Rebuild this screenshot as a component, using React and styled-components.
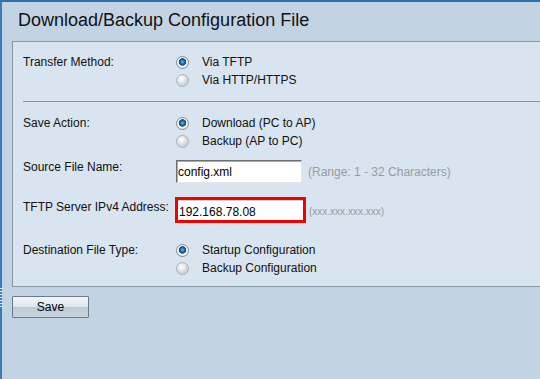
import React from "react";
import styled, { createGlobalStyle } from "styled-components";

const GlobalStyle = createGlobalStyle`
  html, body {
    margin: 0;
    padding: 0;
    background: #c2d4e4;
    overflow: hidden;
  }
  body {
    font-family: "Liberation Sans", Arial, sans-serif;
    font-size: 12px;
    color: #111;
  }
`;

const Page = styled.div`
  display: flex;
  height: 379px;
  box-sizing: border-box;
  border-top: 2px solid #2f6fab;
`;

const Strip = styled.div`
  flex: none;
  width: 2px;
  background: #3a7cbf;
  display: flex;
  flex-direction: column;
`;

const Grip = styled.div`
  margin-top: 286px;
  height: 20px;
  background: repeating-linear-gradient(
    to bottom,
    #e6eef7 0 1px,
    transparent 1px 3px
  );
`;

const Main = styled.div`
  flex: 1;
  min-width: 0;
  padding-left: 10px;
`;

const Title = styled.h1`
  margin: 0;
  padding: 8px 0 0 6px;
  font-size: 18px;
  font-weight: normal;
  line-height: 21px;
  color: #111;
`;

const Panel = styled.div`
  margin-top: 10px;
  background: #d8e4ef;
  border: 1px solid #8697a6;
  border-right: none;
  padding: 11px 0 9px 10px;
`;

const Row = styled.div`
  display: flex;
  align-items: flex-start;
  margin-top: ${(p) => p.$mt || 0}px;
`;

const Label = styled.div`
  flex: none;
  width: 152px;
  line-height: 18px;
  margin-top: ${(p) => p.$mt || 0}px;
`;

const Options = styled.div`
  display: flex;
  flex-direction: column;
`;

const Option = styled.div`
  display: flex;
  align-items: center;
  height: 18px;
`;

const RadioMark = styled.span`
  flex: none;
  width: 13px;
  height: 13px;
  box-sizing: border-box;
  margin: 0 13px 0 1px;
  border-radius: 50%;
  border: 1px solid ${(p) => (p.$checked ? "#7f8e9a" : "#a9b2ba")};
  background: ${(p) =>
    p.$checked
      ? "radial-gradient(circle at 50% 45%, #7cc0ee 0, #1f74b5 1.8px, #0b4a82 3.4px, #ffffff 4.1px, #e6ecf1 5.5px)"
      : "radial-gradient(circle at 40% 35%, #ffffff 0, #ececec 3px, #cdd2d6 6px)"};
`;

const Divider = styled.div`
  margin: 12px 0 12px;
  height: 1px;
  background: #8697a6;
`;

const Field = styled.div`
  display: flex;
  align-items: center;
`;

const TextInput = styled.input`
  box-sizing: border-box;
  width: 126px;
  height: 23px;
  margin: 2px 0 0 1px;
  padding: 0 2px 0 1px;
  border: 1px solid;
  border-color: #6f6f6f #e4e4e4 #e4e4e4 #6f6f6f;
  box-shadow: inset 1px 1px 0 #a9a9a9;
  background: #fff;
  font: 12px "Liberation Sans", Arial, sans-serif;
  color: #000;
  outline: none;
`;

const Highlight = styled.div`
  box-sizing: border-box;
  width: 131px;
  height: 26px;
  border: 3px solid #f20000;
  background: #fff;
  display: flex;
`;

const PlainInput = styled.input`
  box-sizing: border-box;
  width: 100%;
  height: 100%;
  margin: 0;
  padding: 2px 2px 0 1px;
  border: none;
  border-top: 1px solid #cfcfcf;
  background: #fff;
  font: 12px "Liberation Sans", Arial, sans-serif;
  color: #000;
  outline: none;
`;

const Hint = styled.span`
  margin-left: ${(p) => p.$ml}px;
  margin-top: ${(p) => p.$mt || 0}px;
  color: #969ca2;
  font-size: ${(p) => p.$size || 12}px;
`;

const SaveButton = styled.button`
  display: block;
  margin-top: 9px;
  width: 77px;
  height: 22px;
  padding: 0;
  border: 1px solid #6a7a86;
  border-radius: 1px;
  background: linear-gradient(
    to bottom,
    #f2f6f8 0%,
    #dfe7ed 48%,
    #bccbd6 52%,
    #c8d5de 100%
  );
  font: 12px "Liberation Sans", Arial, sans-serif;
  color: #000;
`;

const RadioGroup = ({ options, checked }) => (
  <Options>
    {options.map((o, i) => (
      <Option key={o}>
        <RadioMark $checked={i === checked} />
        {o}
      </Option>
    ))}
  </Options>
);

export default function App() {
  return (
    <>
      <GlobalStyle />
      <Page>
        <Strip>
          <Grip />
        </Strip>
        <Main>
          <Title>Download/Backup Configuration File</Title>
          <Panel>
            <Row>
              <Label>Transfer Method:</Label>
              <RadioGroup options={["Via TFTP", "Via HTTP/HTTPS"]} checked={0} />
            </Row>
            <Divider />
            <Row>
              <Label>Save Action:</Label>
              <RadioGroup
                options={["Download (PC to AP)", "Backup (AP to PC)"]}
                checked={0}
              />
            </Row>
            <Row $mt={8}>
              <Label>Source File Name:</Label>
              <Field>
                <TextInput defaultValue="config.xml" readOnly />
                <Hint $ml={6} $mt={2}>(Range: 1 - 32 Characters)</Hint>
              </Field>
            </Row>
            <Row $mt={14}>
              <Label $mt={1}>TFTP Server IPv4 Address:</Label>
              <Field>
                <Highlight>
                  <PlainInput defaultValue="192.168.78.08" readOnly />
                </Highlight>
                <Hint $ml={3} $mt={3} $size={10}>(xxx.xxx.xxx.xxx)</Hint>
              </Field>
            </Row>
            <Row $mt={18}>
              <Label>Destination File Type:</Label>
              <RadioGroup
                options={["Startup Configuration", "Backup Configuration"]}
                checked={0}
              />
            </Row>
          </Panel>
          <SaveButton>Save</SaveButton>
        </Main>
      </Page>
    </>
  );
}
